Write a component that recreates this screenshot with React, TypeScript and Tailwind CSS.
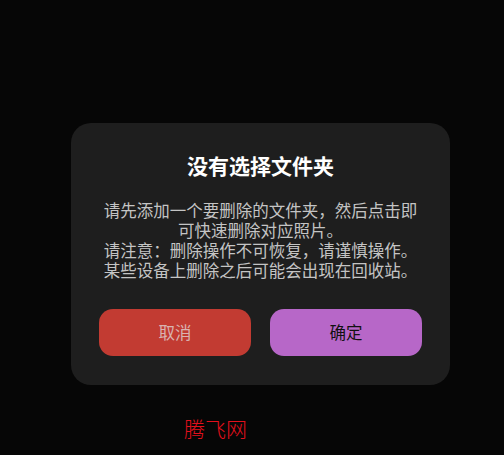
import React from 'react';

/**
 * "No folder selected" dialog on a dark screen
 */
const App: React.FC = () => {
    return (
        <div
            className="h-[455px] w-full overflow-hidden bg-[#060606] pt-[123px]"
            style={{ fontFamily: '"Noto Sans CJK SC", "Noto Sans", sans-serif' }}
        >
            <div className="ml-[71px] w-[379px] rounded-[20px] bg-[#1e1e1e] px-[28px] pt-[28px] pb-[29px]">
                <h2 className="text-center text-[21px] font-bold leading-[28px] text-white">没有选择文件夹</h2>
                <p className="mt-[21px] text-center text-[16.5px] leading-[20px] text-[#c4c4c4]">
                    请先添加一个要删除的文件夹，然后点击即可快速删除对应照片。
                    <br />
                    请注意：删除操作不可恢复，请谨慎操作。
                    <br />
                    某些设备上删除之后可能会出现在回收站。
                </p>
                <div className="mt-[29px] flex gap-[19px]">
                    <button className="flex h-[47px] flex-1 items-center justify-center rounded-[14px] bg-[#c23b32] text-[16.5px] text-[#d9b3b0]">
                        取消
                    </button>
                    <button className="flex h-[47px] flex-1 items-center justify-center rounded-[14px] bg-[#b767c8] text-[16.5px] text-[#111111]">
                        确定
                    </button>
                </div>
            </div>
            <div className="mt-[29px] pl-[184px] text-[21px] font-light leading-[28px] text-[#e3101c]">腾飞网</div>
        </div>
    );
};

export default App;
